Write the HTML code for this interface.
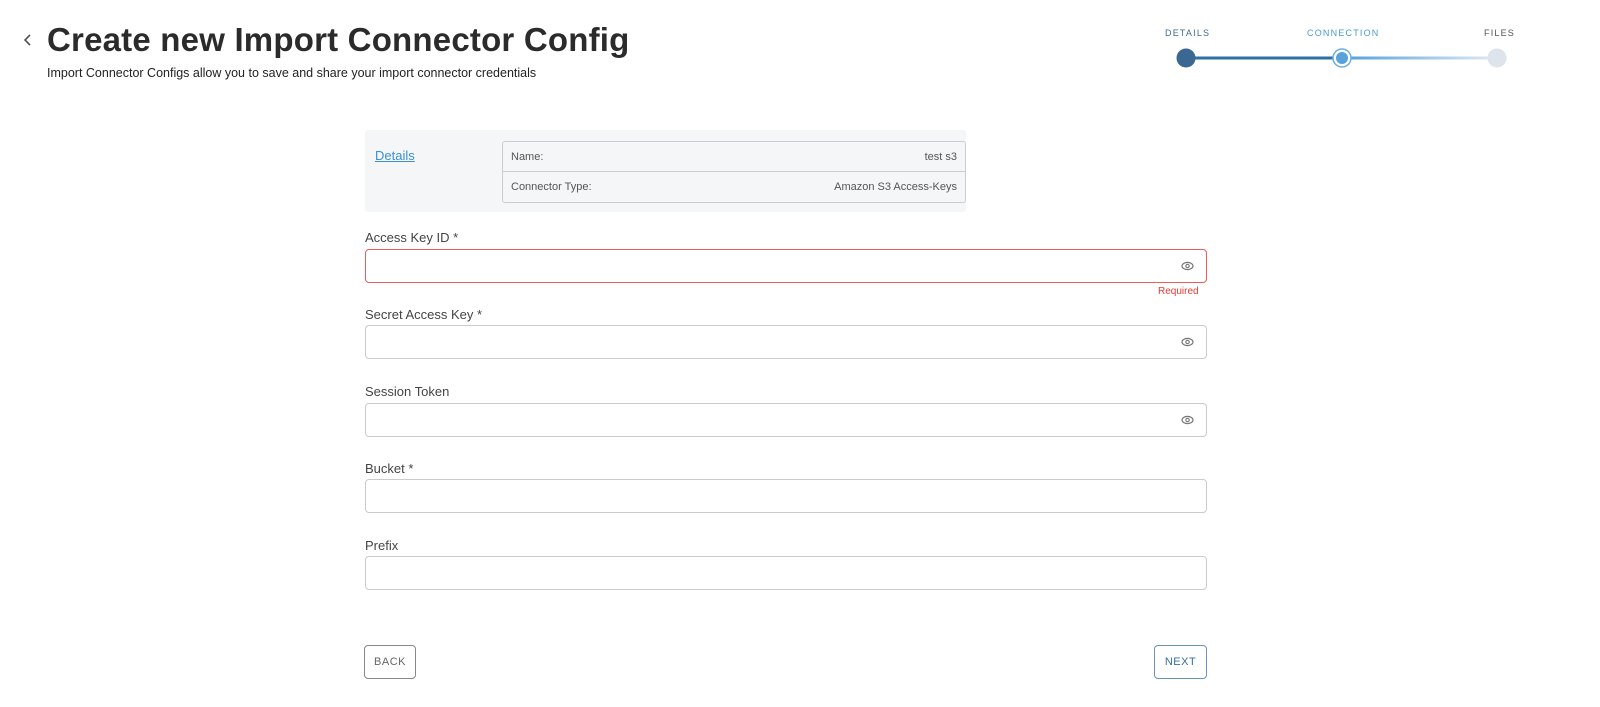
<!DOCTYPE html>
<html><head><style>
body{margin:0;width:1600px;height:707px;background:#fff;font-family:"Liberation Sans",sans-serif;position:relative;overflow:hidden;color:#333}
.a{position:absolute}
.lbl{position:absolute;left:365px;font-size:13px;color:#444}
.inp{position:absolute;left:365px;width:840px;height:32px;border:1px solid #c8ccd0;border-radius:4px}
.eye{position:absolute;right:12px;top:11px}
.btn{position:absolute;top:645px;height:32px;border:1px solid #999;border-radius:4px;font-size:11px;line-height:32px;text-align:center;letter-spacing:.5px}
.st{position:absolute;top:28px;font-size:9px;letter-spacing:1.2px}
</style></head><body>
<svg class="a" style="left:22px;top:33px" width="12" height="14"><path d="M8 2 L3 7 L8 12" stroke="#555" stroke-width="1.6" fill="none"/></svg>
<div class="a" style="left:47px;top:21px;font-size:33px;font-weight:bold;color:#2b2b2b;letter-spacing:.2px">Create new Import Connector Config</div>
<div class="a" style="left:47px;top:66px;font-size:12.5px;color:#222">Import Connector Configs allow you to save and share your import connector credentials</div>

<div class="st" style="left:1165px;color:#3d6a94">DETAILS</div>
<div class="st" style="left:1307px;color:#4a9ad6">CONNECTION</div>
<div class="st" style="left:1484px;color:#555">FILES</div>
<svg class="a" style="left:1170px;top:45px" width="345" height="26">
<defs><linearGradient id="g" gradientUnits="userSpaceOnUse" x1="172" y1="0" x2="327" y2="0"><stop offset="0" stop-color="#4f9fdc"/><stop offset="1" stop-color="#e2eaf2"/></linearGradient></defs>
<line x1="16" y1="13" x2="172" y2="13" stroke="#2f6fa3" stroke-width="3"/>
<rect x="172" y="11.5" width="155" height="3" fill="url(#g)"/>
<circle cx="16" cy="13" r="9.5" fill="#3a6892"/>
<circle cx="172" cy="13" r="9" fill="#fff" stroke="#6aaee4" stroke-width="1.5"/>
<circle cx="172" cy="13" r="6" fill="#58a2dc"/>
<circle cx="327" cy="13" r="9.5" fill="#dde4ec"/>
</svg>

<div class="a" style="left:365px;top:130px;width:601px;height:82px;background:#f5f6f8;border-radius:3px"></div>
<div class="a" style="left:375px;top:148px;font-size:13px;color:#3b8fd3;text-decoration:underline">Details</div>
<div class="a" style="left:502px;top:141px;width:462px;height:60px;border:1px solid #c9cdd2;border-radius:3px;font-size:11px;color:#555">
<div style="height:29px;border-bottom:1px solid #c9cdd2;display:flex;justify-content:space-between;align-items:center;padding:0 8px">
<span>Name:</span><span>test s3</span></div>
<div style="height:30px;display:flex;justify-content:space-between;align-items:center;padding:0 8px">
<span>Connector Type:</span><span>Amazon S3 Access-Keys</span></div>
</div>

<div class="lbl" style="top:230px">Access Key ID *</div>
<div class="inp" style="top:249px;border-color:#ef5a5a"><svg class="eye" width="13" height="10"><ellipse cx="6.5" cy="5" rx="5.5" ry="3.6" fill="none" stroke="#777" stroke-width="1.2"/><circle cx="6.5" cy="5" r="1.7" fill="none" stroke="#777" stroke-width="1.1"/></svg></div>
<div class="a" style="left:1158px;top:286px;font-size:10px;color:#e53935">Required</div>

<div class="lbl" style="top:307px">Secret Access Key *</div>
<div class="inp" style="top:325px"><svg class="eye" width="13" height="10"><ellipse cx="6.5" cy="5" rx="5.5" ry="3.6" fill="none" stroke="#777" stroke-width="1.2"/><circle cx="6.5" cy="5" r="1.7" fill="none" stroke="#777" stroke-width="1.1"/></svg></div>

<div class="lbl" style="top:384px">Session Token</div>
<div class="inp" style="top:403px"><svg class="eye" width="13" height="10"><ellipse cx="6.5" cy="5" rx="5.5" ry="3.6" fill="none" stroke="#777" stroke-width="1.2"/><circle cx="6.5" cy="5" r="1.7" fill="none" stroke="#777" stroke-width="1.1"/></svg></div>

<div class="lbl" style="top:461px">Bucket *</div>
<div class="inp" style="top:479px"></div>

<div class="lbl" style="top:538px">Prefix</div>
<div class="inp" style="top:556px"></div>

<div class="btn" style="left:364px;width:50px;color:#666;border-color:#888">BACK</div>
<div class="btn" style="left:1154px;width:51px;color:#2f6fa3;border-color:#6c93b8">NEXT</div>
</body></html>
